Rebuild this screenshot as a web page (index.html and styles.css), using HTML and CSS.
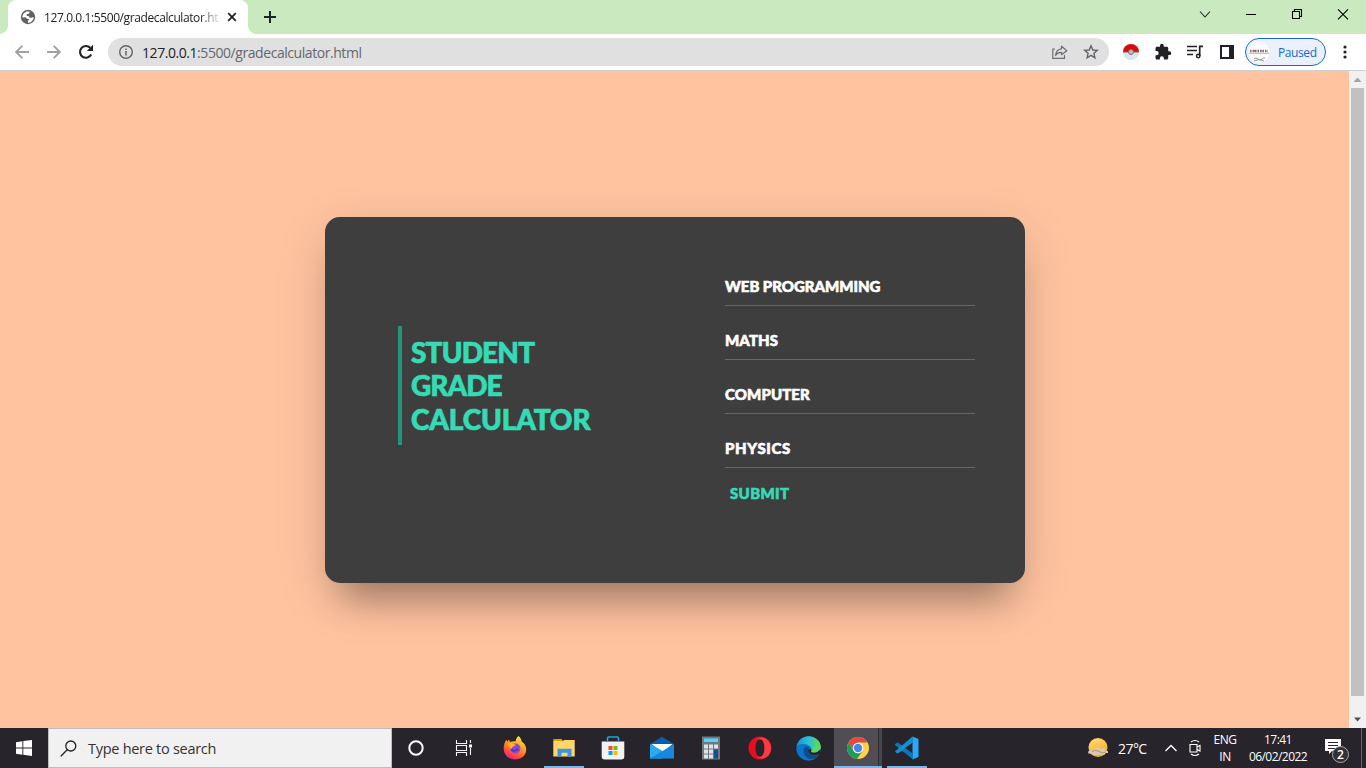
FILE: index.html
```html
<!DOCTYPE html>
<html lang="en">
<head>
<meta charset="utf-8">
<title>Grade calculator</title>
<link rel="stylesheet" href="styles.css">
</head>
<body>
<div class="screen">
  <header class="tabstrip">
    <div class="tab">
      <svg class="globe" width="16" height="16" viewBox="0 0 16 16"><circle cx="8" cy="8" r="7.2" fill="#5f6368"/><path d="M2.200 8.500 3 5.200 6.300 2.600 9.600 2.500 9.200 4.500 6.800 5.300 6.500 6.800 9 7.300 9.600 8.800 11.500 8.800 13.700 8 13.300 10.500 10.800 13.200 8 13.900 8 12 9.300 10.300 6.800 9.600 5.500 8.300Z" fill="#fff"/></svg>
      <span class="tab-title">127.0.0.1:5500/gradecalculator.ht</span>
      <svg class="tab-close" width="10" height="10" viewBox="0 0 10 10"><path d="M1.2 1.2 8.8 8.8M8.8 1.2 1.2 8.8" stroke="#202124" stroke-width="1.8"/></svg>
    </div>
    <svg class="newtab" width="14" height="14" viewBox="0 0 14 14"><path d="M7 1V13M1 7H13" stroke="#202124" stroke-width="2"/></svg>
    <div class="window-buttons">
      <svg width="46" height="28" viewBox="0 0 46 28"><path d="M18 11.500 23 17 28 11.500" fill="none" stroke="#222" stroke-width="1.100"/></svg>
      <svg width="46" height="28" viewBox="0 0 46 28"><path d="M18 14.5H28" stroke="#000" stroke-width="1"/></svg>
      <svg width="46" height="28" viewBox="0 0 46 28"><path d="M18.500 11.500H25.500V18.500H18.500ZM20.500 11V9.500H27.500V16.500H26" fill="none" stroke="#000" stroke-width="1.1"/></svg>
      <svg width="46" height="28" viewBox="0 0 46 28"><path d="M18 9.300 28 19.300M28 9.300 18 19.300" stroke="#000" stroke-width="1.1"/></svg>
    </div>
  </header>

  <nav class="toolbar">
    <div class="nav-buttons">
      <svg width="16" height="16" viewBox="0 0 16 16"><path d="M15 8H2.500M8.300 1.800 2.100 8 8.300 14.200" fill="none" stroke="#a1a1a1" stroke-width="1.900"/></svg>
      <svg width="16" height="16" viewBox="0 0 16 16"><path d="M1 8H13.500M7.700 1.800 13.900 8 7.700 14.200" fill="none" stroke="#a1a1a1" stroke-width="1.900"/></svg>
      <svg width="16" height="16" viewBox="0 0 16 16"><path d="M13.200 10.500A5.900 5.900 0 1 1 12.200 3.800" fill="none" stroke="#202124" stroke-width="2.100"/><path d="M15 .8V7H8.800Z" fill="#202124"/></svg>
    </div>
    <div class="address">
      <svg width="16" height="16" viewBox="0 0 16 16"><circle cx="8" cy="8" r="6.300" fill="none" stroke="#5f6368" stroke-width="1.400"/><path d="M8 7V11.600M8 4.400V5.900" stroke="#5f6368" stroke-width="1.500"/></svg>
      <span class="url"><b>127.0.0.1</b>:5500/gradecalculator.html</span>
      <svg class="share" width="18" height="16" viewBox="0 0 18 16"><path d="M4 5H1.800V14.300H13.500V11" fill="none" stroke="#6b6e72" stroke-width="1.200"/><path d="M10.500 2.200 15.800 6.700 10.500 10.700V8.300C7.500 8.200 5.800 9.300 4.500 11.300 5 7.500 7 5.200 10.500 4.800Z" fill="none" stroke="#6b6e72" stroke-width="1.200" stroke-linejoin="round"/></svg>
      <svg class="star" width="16" height="16" viewBox="0 0 16 16"><path d="M8 1.800 9.800 6 14.300 6.400 10.900 9.300 11.900 13.800 8 11.400 4.100 13.800 5.100 9.300 1.700 6.400 6.200 6Z" fill="none" stroke="#5f6368" stroke-width="1.400"/></svg>
    </div>
    <div class="extensions">
      <svg width="18" height="18" viewBox="0 0 18 18"><circle cx="9" cy="9" r="8" fill="#d9e6ea"/><path d="M1 9a8 8 0 0 1 16 0Z" fill="#dc0b0b"/><path d="M1 9H17" stroke="#8a5d60" stroke-width="1"/><circle cx="9" cy="9" r="2.500" fill="#b7c1c5" stroke="#7d7072" stroke-width="1"/></svg>
      <svg width="18" height="18" viewBox="0 0 24 24"><path fill="#202124" d="M20.500 11H19V7c0-1.100-.9-2-2-2h-4V3.500a2.500 2.500 0 0 0-5 0V5H4c-1.100 0-2 .9-2 2v3.800h1.500a2.700 2.700 0 0 1 0 5.400H2V20c0 1.100.9 2 2 2h3.800v-1.500a2.700 2.700 0 0 1 5.400 0V22H17c1.100 0 2-.9 2-2v-4h1.500a2.500 2.500 0 0 0 0-5Z"/></svg>
      <svg width="18" height="18" viewBox="0 0 18 18"><path d="M1 3.500H11M1 7.500H11M1 11.500H7" stroke="#202124" stroke-width="1.600"/><path d="M13.700 13V3.300H17" fill="none" stroke="#202124" stroke-width="1.700"/><circle cx="12.200" cy="13" r="1.700" fill="none" stroke="#202124" stroke-width="1.500"/></svg>
      <svg width="18" height="18" viewBox="0 0 18 18"><path fill="#202124" fill-rule="evenodd" d="M2 2H16V16H2ZM4 4V14H11V4Z"/></svg>
    </div>
    <div class="profile">
      <svg width="22" height="22" viewBox="0 0 22 22"><circle cx="11" cy="11" r="10.500" fill="#fbfbfb"/><path d="M2 10H20" stroke="#777" stroke-width="2.600" stroke-dasharray="1.500 1"/><path d="M1 12.300H21" stroke="#b9b1b1"/><path d="M6 18Q8 16 10 18T14 18 17 17M6 20Q11 17 16 20" fill="none" stroke="#999"/><path d="M6 9h1v2H6ZM13.500 9h1v2h-1Z" fill="#e45a5a"/></svg>
      <span>Paused</span>
    </div>
    <svg class="menu" width="4" height="14" viewBox="0 0 4 14"><g fill="#202124"><circle cx="2" cy="2" r="1.600"/><circle cx="2" cy="7" r="1.600"/><circle cx="2" cy="12" r="1.600"/></g></svg>
  </nav>

  <div class="viewport">
    <main class="page">
      <section class="card">
        <div class="heading-side">
          <h1 class="title"><span class="t1">STUDENT</span><span class="t2">GRADE</span><span class="t3">CALCULATOR</span></h1>
        </div>
        <form class="fields">
          <div class="field f1">WEB PROGRAMMING</div>
          <div class="field f2">MATHS</div>
          <div class="field f3">COMPUTER</div>
          <div class="field f4">PHYSICS</div>
          <div class="submit">SUBMIT</div>
        </form>
      </section>
    </main>
    <div class="scrollbar">
      <svg width="17" height="17" viewBox="0 0 17 17"><path d="M4.500 11 8.500 6.500 12.500 11Z" fill="#a3a3a3"/></svg>
      <div class="thumb"></div>
      <svg width="17" height="17" viewBox="0 0 17 17"><path d="M5 6.500H12L8.500 10.500Z" fill="#505050"/></svg>
    </div>
  </div>

  <footer class="taskbar">
    <div class="start"><svg width="16" height="16" viewBox="0 0 16 16"><path fill="#fff" d="M0 2.200 6.400 1.300V7.400H0ZM7.300 1.100 16 0V7.400H7.300ZM0 8.400H6.400V14.700L0 13.800ZM7.300 8.400H16V16L7.300 14.800Z"/></svg></div>
    <div class="search">
      <svg width="17" height="17" viewBox="0 0 17 17"><circle cx="10.800" cy="6" r="5" fill="none" stroke="#222" stroke-width="1.300"/><path d="M7.200 9.700.8 16.200" stroke="#222" stroke-width="1.300"/></svg>
      <span>Type here to search</span>
    </div>
    <div class="system">
      <svg width="18" height="18" viewBox="0 0 18 18"><circle cx="9" cy="9" r="6.700" fill="none" stroke="#fff" stroke-width="2"/></svg>
      <svg width="18" height="18" viewBox="0 0 18 18"><path d="M1.500 1V4.500H11.500V1M1.500 17V13.500H11.500V17M1.500 6.500H11.500V11.500H1.500ZM15.500 1V4M15.500 9V16" fill="none" stroke="#f2f2f2" stroke-width="1.100"/><path d="M14 5.500h3v3h-3Z" fill="#fff"/></svg>
    </div>
    <div class="apps">
      <div class="app"><svg width="24" height="24" viewBox="0 0 24 24"><defs><linearGradient id="ff" x1=".8" y1="0" x2=".3" y2="1"><stop offset="0" stop-color="#fff04a"/><stop offset=".45" stop-color="#ff9a20"/><stop offset=".8" stop-color="#ff4248"/><stop offset="1" stop-color="#df208e"/></linearGradient></defs><path d="M15.500 0C18 2 18.500 4 18.600 5.500 21 7 23.500 10 23.200 14 22.700 20 18 23.500 12 23.500 5.500 23.500.7 19 .7 12.500.7 9 1.800 6 3.300 3.800L4.200 5.700 6 3.500 7 6C9 5 11 5 12.500 5.400 12.800 3 14 1.200 15.500 0Z" fill="url(#ff)"/><circle cx="12.500" cy="12.500" r="5" fill="#8847dd"/><path d="M5 7.500C8 6 9 8 12.800 8.500 11.500 11 9 10 8.500 13 6 12 5 10 5 7.500Z" fill="#ffb51e"/><path d="M8.200 13.500c2 2 5 2 6.500-1" stroke="#5b34bb" stroke-width="2" fill="none"/></svg></div>
      <div class="app running"><svg width="24" height="24" viewBox="0 0 24 24"><path d="M1.300 3H9.500L11 5H1.300Z" fill="#e59b08"/><path d="M1.300 5H11L12.200 4H22.700V20.500H1.300Z" fill="#ffd667"/><path d="M5.500 20.500V12.700H19.500V20.500H15.500V16.700H9.500V20.500Z" fill="#3997df"/></svg></div>
      <div class="app"><svg width="24" height="24" viewBox="0 0 24 24"><path d="M.7 5.500H23.300V20.500Q23.300 23.500 20.300 23.500H3.700Q.7 23.500.7 20.500Z" fill="#f2f2f2"/><path d="M6.500 6V2.200Q6.500 1 7.700 1H16.300Q17.500 1 17.500 2.200V6" fill="none" stroke="#16a7e5" stroke-width="1.600"/><path fill="#f25022" d="M7.500 10h4v4h-4Z"/><path fill="#7fba00" d="M12.500 10h4v4h-4Z"/><path fill="#00a4ef" d="M7.500 15h4v4h-4Z"/><path fill="#ffb900" d="M12.500 15h4v4h-4Z"/></svg></div>
      <div class="app"><svg width="24" height="24" viewBox="0 0 24 24"><path d="M0 8 12 .8 24 8V12H0Z" fill="#075ead"/><path d="M1.500 8H22.500L12 17Z" fill="#fff"/><path d="M0 8 12 14.500V22.500H0Z" fill="#29a9ee"/><path d="M24 8V22.500H0Z" fill="#1689df"/></svg></div>
      <div class="app"><svg width="24" height="24" viewBox="0 0 24 24"><path d="M3 .5H21V23.500H3Z" fill="#717880"/><path d="M5 2.500H19V6H5Z" fill="#52d6fb"/><g fill="#e1e3e6"><path d="M5 8.500h4v4H5ZM10 8.500h4v4h-4ZM15 8.500h4v4h-4ZM5 13.500h4v4H5ZM10 13.500h4v4h-4ZM5 18.500h4v4H5ZM10 18.500h4v4h-4Z"/></g><path d="M15 13.500h4v9h-4Z" fill="#124e97"/></svg></div>
      <div class="app"><svg width="24" height="24" viewBox="0 0 24 24"><path fill-rule="evenodd" d="M12 .5a11.300 11.300 0 0 0 0 23 11.300 11.300 0 0 0 0-23ZM12 3.200c-6 0-6 17.600 0 17.600S18 3.200 12 3.200Z" fill="#e90d20"/><path fill-rule="evenodd" d="M8.500 4.200C12 .5 16 1 19.300 3.900 24.500 9 24 16.500 19 20.700 15 23.500 11 23 8.500 19.800 10 21 11 21 12 20.800 18 20.800 18 3.200 12 3.200 11 3.200 9.500 3.500 8.500 4.200Z" fill="#f93d42"/></svg></div>
      <div class="app"><svg width="25" height="25" viewBox="0 0 24 24"><defs><linearGradient id="ed"><stop offset="0" stop-color="#168fd7"/><stop offset=".5" stop-color="#2cc1d6"/><stop offset="1" stop-color="#62dc3d"/></linearGradient></defs><circle cx="12" cy="12" r="11.700" fill="#0876c9"/><path d="M.5 10C2 3.500 7 .2 12 .2 19 .2 24 5.500 23.800 10.500 23.500 15 19.500 17 15 15.500 13.800 15 15.300 14.500 15 12.500 14.500 8 5 5.500.5 10Z" fill="url(#ed)"/><path d="M9 10C5 15 8 21 14 22 18 22.500 21 20 22 18 17 20 12 18 11.500 14Q11.400 12 13 10.700Z" fill="#114a8e"/><path d="M11.500 13C11.500 18 17 20 23 17L24 21 23 13 15 15.500C14 15 15 14 15 12.500Z" fill="#28242b"/><path d="M15 12.500C15.500 14 14 14.700 15 15.500 19 17 23.500 14 23.800 10.500L20 9Z" fill="#5cd666"/></svg></div>
      <div class="app active"><svg width="24" height="24" viewBox="0 0 24 24"><circle cx="12" cy="12" r="11" fill="#ffd04b"/><path d="M2.500 6.500A11 11 0 0 1 21.500 6.500H12L7.500 14.500Z" fill="#dc4c3f"/><path d="M2.500 6.500A11 11 0 0 0 11 23L16.500 15 12 17.500 7.500 14.500Z" fill="#209c5a"/><circle cx="12" cy="12" r="5.300" fill="#fff"/><circle cx="12" cy="12" r="4.200" fill="#4285f4"/></svg></div>
      <div class="app running"><svg width="24" height="24" viewBox="0 0 24 24"><path d="M17.500 .5 23.500 3V21L17.500 23.500Z" fill="#2aa8f2"/><path d="M0 8.200 1.700 6.700 3.300 6.800 18 17.800V23.500L.2 9.300Z" fill="#0878bd"/><path d="M0 15.500 17.500.5 18 6.200 3.300 17.200 1.700 17.300Z" fill="#168fd5"/></svg></div>
    </div>
    <div class="tray">
      <svg class="weather" width="24" height="24" viewBox="0 0 24 24"><defs><linearGradient id="sun" x2=".4" y2="1"><stop stop-color="#ffe17a"/><stop offset="1" stop-color="#f9a91e"/></linearGradient></defs><circle cx="12" cy="11.500" r="9.500" fill="url(#sun)"/><path d="M2.500 17.500C1 15 5 13 7.500 14 9 11 12.500 10 15 13 18 10.500 20 13 19.500 15H22V17H20Q18 20 14 18.500 8 20.500 6 18Z" fill="#dbc8b2"/><path d="M6 15.500Q10 13 13 15.500T20 16" fill="none" stroke="#b9935f"/></svg>
      <span class="temp">27°C</span>
      <svg class="caret" width="14" height="14" viewBox="0 0 14 14"><path d="M1.500 10 7 4.500 12.500 10" fill="none" stroke="#fff" stroke-width="1.300"/></svg>
      <svg class="meet" width="14" height="18" viewBox="0 0 14 18"><path d="M2 5.500H9V13H2ZM9 8 12 6.500V12L9 10.500M3 3Q7 0 11 3M3 15Q7 18 11 15" fill="none" stroke="#fff" stroke-width="1.100"/></svg>
      <div class="lang"><span>ENG</span><span>IN</span></div>
      <div class="clock"><span>17:41</span><span>06/02/2022</span></div>
      <div class="notice"><svg width="26" height="26" viewBox="0 0 26 26"><path d="M1 1H17V13H8L5 16V13H1Z" fill="#fff"/><path d="M4 4.500H14M4 7.500H14M4 10.500H11" stroke="#28242b"/></svg><span class="badge">2</span></div>
    </div>
    <div class="peek"></div>
  </footer>
</div>
</body>
</html>
```

FILE: styles.css
```css
* { box-sizing: border-box; }
body { margin: 0; overflow: hidden; font-family: "Open Sans", "Noto Sans", sans-serif; }
svg { display: block; flex: none; }
.screen { width: 1366px; height: 768px; display: flex; flex-direction: column; overflow: hidden; }

.tabstrip { height: 34px; flex: none; display: flex; background: #cae9bf; padding-left: 8px; }
.tab { position: relative; width: 240px; height: 34px; background: #fff; border-radius: 8px 8px 0 0; display: flex; align-items: center; padding-left: 12px; }
.tab::before, .tab::after { content: ""; position: absolute; bottom: 0; width: 8px; height: 8px; }
.tab::before { left: -8px; background: radial-gradient(circle at 0 0, transparent 7.5px, #fff 8px); }
.tab::after { right: -8px; background: radial-gradient(circle at 100% 0, transparent 7.5px, #fff 8px); }
.tab-title { margin-left: 8px; width: 175px; white-space: nowrap; font-size: 12px; letter-spacing: -.4px; color: #202124; -webkit-mask-image: linear-gradient(90deg, #000 155px, transparent 178px); mask-image: linear-gradient(90deg, #000 155px, transparent 178px); }
.tab-close { margin-left: 8px; }
.newtab { margin: 10px 0 0 15px; }
.window-buttons { margin-left: auto; display: flex; }

.toolbar { height: 37px; flex: none; display: flex; align-items: center; background: #fff; border-bottom: 1px solid #d0d0d0; padding-left: 14px; }
.nav-buttons { display: flex; gap: 16px; }
.address { margin-left: 14px; width: 1001px; height: 28px; border-radius: 14px; background: #e0e0e0; display: flex; align-items: center; padding: 0 10px; }
.url { margin-left: 8px; font-size: 14px; letter-spacing: -.44px; color: #65686b; }
.url b { color: #202124; font-weight: 400; }
.share { margin-left: auto; }
.star { margin-left: 14px; }
.extensions { display: flex; gap: 14px; margin-left: 13px; }
.profile { margin-left: 9px; width: 81px; height: 28px; flex: none; border: 1px solid #1b66d2; border-radius: 14px; background: #ebf1fb; display: flex; align-items: center; padding-left: 2px; font-size: 12px; letter-spacing: -.4px; color: #1967d2; }
.profile span { margin-left: 8px; }
.menu { margin-left: 17px; }

.viewport { height: 657px; flex: none; display: flex; }
.page { width: 1349px; background: #ffc3a0; display: flex; align-items: center; justify-content: center; overflow: hidden; }
.card { width: 700px; height: 366px; margin-left: 1px; background: #3e3e3e; border-radius: 15px; box-shadow: 0 15px 50px rgba(0, 0, 0, .15), 0 34px 34px -19px rgba(0, 0, 0, .29); display: flex; font-family: Lato, sans-serif; font-weight: 900; }
.heading-side { width: 400px; padding: 109px 0 0 73px; }
.title { margin: 0; height: 119px; border-left: 4px solid #21967a; padding: 10px 0 0 9px; display: flex; flex-direction: column; color: #34dbb5; font-size: 28px; line-height: 33.6px; font-weight: 900; -webkit-text-stroke: .7px #34dbb5; }
.title span { white-space: nowrap; }
.t1 { letter-spacing: -.85px; }
.t2 { letter-spacing: -1px; }
.t3 { letter-spacing: -.15px; }
.fields { width: 250px; padding-top: 48px; }
.field { height: 41px; margin-bottom: 13px; padding-top: 11px; line-height: 20px; border-bottom: 1px solid #676767; color: #fff; font-size: 15px; -webkit-text-stroke: .6px #fff; }
.f1 { letter-spacing: -.03px; }
.f2 { letter-spacing: .1px; }
.f3 { letter-spacing: .1px; }
.f4 { letter-spacing: .65px; }
.submit { padding-left: 5px; margin-top: -9px; padding-top: 11px; line-height: 20px; font-size: 15px; letter-spacing: .35px; color: #34dbb5; -webkit-text-stroke: .6px #34dbb5; }
.scrollbar { width: 17px; background: #f1f1f1; display: flex; flex-direction: column; }
.thumb { width: 13px; height: 608px; margin: 0 2px auto; background: #c1c1c1; }

.taskbar { height: 40px; flex: none; display: flex; background: #28242b; color: #fff; }
.start { width: 48px; display: grid; place-items: center; }
.search { width: 344px; background: #f1f1f1; border: 1px solid #bdbdbd; display: flex; align-items: center; padding-left: 11px; color: #333; font-size: 14.500px; letter-spacing: -.28px; }
.search span { margin-left: 11px; }
.system { width: 98px; display: flex; align-items: center; gap: 30px; padding-left: 15px; }
.apps { display: flex; }
.app { width: 49px; height: 40px; display: grid; place-items: center; }
.running { background: linear-gradient(#76b9ed, #76b9ed) 5px 38px / 40px 2px no-repeat; }
.active { background: linear-gradient(#76b9ed, #76b9ed) 1px 38px / 48px 2px no-repeat, linear-gradient(90deg, transparent 1px, #504e54 1px 45px, #302d33 45px 46px, #48454b 46px 49px); }
.tray { display: flex; align-items: center; width: 430px; padding-left: 155px; font-size: 12px; }
.temp { margin-left: 8px; width: 31px; font-size: 14px; letter-spacing: -.55px; white-space: nowrap; }
.caret { margin-left: 15px; }
.meet { margin-left: 10px; }
.lang, .clock { display: flex; flex-direction: column; align-items: center; line-height: 17px; white-space: nowrap; }
.lang { width: 26px; margin-left: 10px; letter-spacing: -.5px; }
.clock { width: 60px; margin-left: 10px; padding-bottom: 1px; letter-spacing: -.55px; }
.notice { position: relative; margin-left: 16px; padding-top: 5px; }
.badge { position: absolute; left: 8px; top: 13px; width: 17px; height: 17px; border: 1px solid #a7a7a7; border-radius: 50%; background: #333036; font-size: 12px; font-weight: 600; line-height: 15px; text-align: center; }
.peek { width: 1px; height: 40px; background: #68656b; }
```
